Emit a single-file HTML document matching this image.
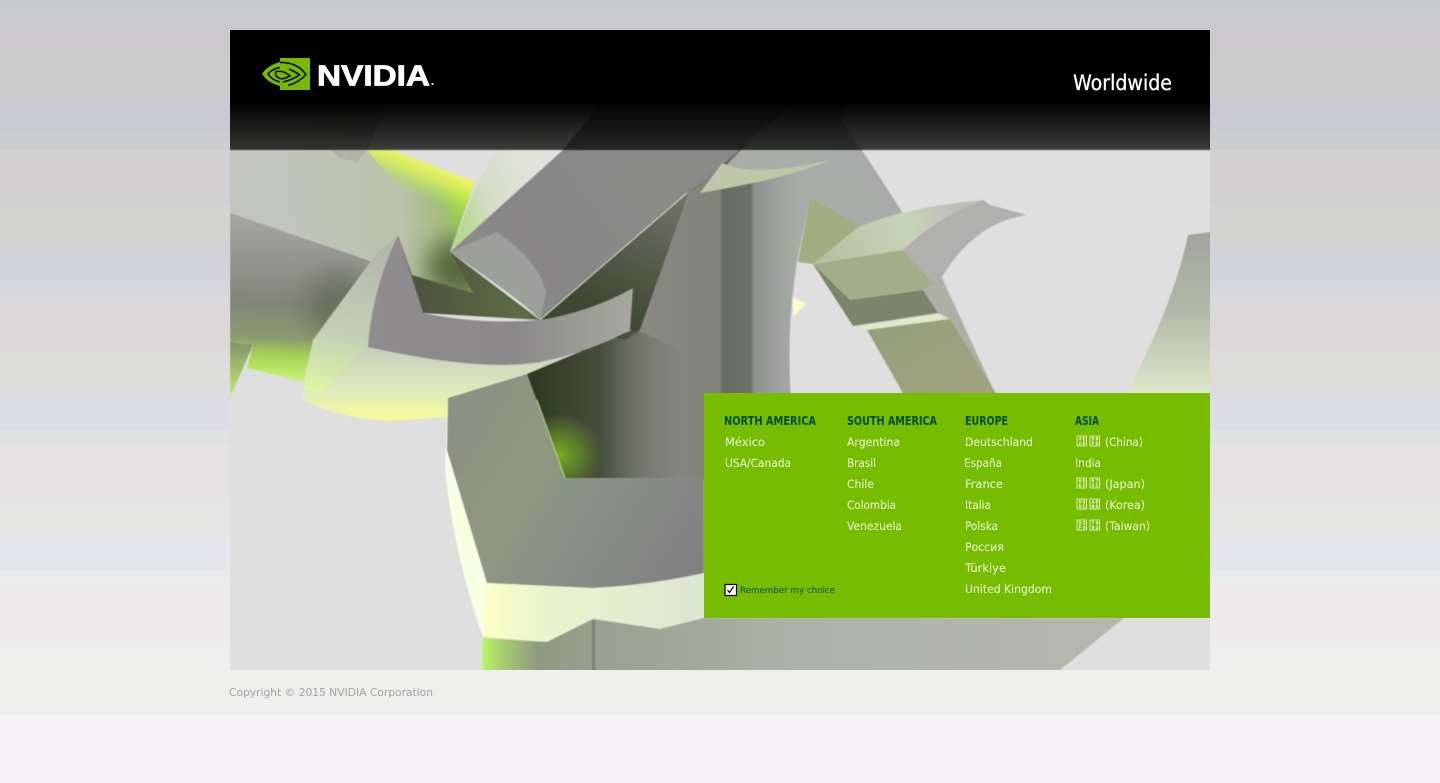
<!DOCTYPE html>
<html lang="en"><head><meta charset="utf-8"><title>NVIDIA Worldwide</title>
<style>
html,body{margin:0;padding:0;width:1440px;height:783px;overflow:hidden;background:#f5f3f7}
svg{display:block;position:absolute;left:0;top:0}
.l{font:11.5px "DejaVu Sans","Liberation Sans",sans-serif;fill:#f2f9e0}
.h{font:bold 12px "DejaVu Sans","Liberation Sans",sans-serif;fill:#00501f}
.t{font:bold 5px "Liberation Mono",monospace;fill:#f2f9e0}
a{text-decoration:none}
</style></head><body>
<svg width="1440" height="783" viewBox="0 0 1440 783" xmlns="http://www.w3.org/2000/svg">
<defs>
<clipPath id="art"><rect x="230" y="30" width="980" height="640"/></clipPath>
<clipPath id="lowc"><path d="M230 213L373 262L313 340L304 382L247 368L253 345L230 342Z"/></clipPath>
<clipPath id="bandc"><path d="M230 90H397L367 150H393L475 182L450 252L473 293L412 275L398 235L373 262L230 213Z"/></clipPath>
<filter id="b6" x="-100%" y="-100%" width="300%" height="300%" color-interpolation-filters="sRGB"><feGaussianBlur stdDeviation="12"/></filter>
<filter id="soft" x="0" y="0" width="100%" height="100%" color-interpolation-filters="sRGB"><feGaussianBlur stdDeviation=".45"/></filter>
<linearGradient id="ring" gradientUnits="userSpaceOnUse" x1="612" y1="0" x2="797" y2="0"><stop offset="0" stop-color="#8b8e85"/><stop offset=".58" stop-color="#81837c"/><stop offset=".6" stop-color="#686b62"/><stop offset=".75" stop-color="#6c7067"/><stop offset=".77" stop-color="#8f9490"/><stop offset="1" stop-color="#a8aca8"/></linearGradient>
<linearGradient id="band" gradientUnits="userSpaceOnUse" x1="280" y1="200" x2="475" y2="190"><stop offset="0" stop-color="#c1c4bc"/><stop offset=".6" stop-color="#bbc2ac"/><stop offset=".85" stop-color="#a3bc80"/><stop offset="1" stop-color="#98d048"/></linearGradient>
<linearGradient id="yel" gradientUnits="userSpaceOnUse" x1="440" y1="165" x2="425" y2="200"><stop offset="0" stop-color="#f6f76c"/><stop offset=".45" stop-color="#d8f258" stop-opacity=".8"/><stop offset="1" stop-color="#a6e545" stop-opacity="0"/></linearGradient>
<linearGradient id="low" gradientUnits="userSpaceOnUse" x1="262" y1="222" x2="256" y2="382"><stop offset="0" stop-color="#a3a3a0"/><stop offset=".5" stop-color="#83867a"/><stop offset=".72" stop-color="#8c9a70"/><stop offset=".83" stop-color="#a4d455"/><stop offset="1" stop-color="#d0f778"/></linearGradient>
<linearGradient id="bl" x1="0" y1="0" x2="0" y2="1"><stop offset="0" stop-color="#83926c"/><stop offset="1" stop-color="#bdf36a"/></linearGradient>
<linearGradient id="bd" gradientUnits="userSpaceOnUse" x1="620" y1="320" x2="690" y2="195"><stop offset="0" stop-color="#3e4832"/><stop offset="1" stop-color="#70756a"/></linearGradient>
<linearGradient id="boxl" gradientUnits="userSpaceOnUse" x1="455" y1="210" x2="530" y2="180"><stop offset="0" stop-color="#b6d98e"/><stop offset=".45" stop-color="#d5ddca"/><stop offset="1" stop-color="#dfe3da"/></linearGradient>
<linearGradient id="boxg" gradientUnits="userSpaceOnUse" x1="470" y1="300" x2="620" y2="190"><stop offset="0" stop-color="#90908e"/><stop offset=".4" stop-color="#888687"/><stop offset="1" stop-color="#8a8a89"/></linearGradient>
<linearGradient id="thl" gradientUnits="userSpaceOnUse" x1="0" y1="240" x2="0" y2="420"><stop offset="0" stop-color="#b5b9b0"/><stop offset=".6" stop-color="#c6cebb"/><stop offset=".83" stop-color="#dfeabf"/><stop offset="1" stop-color="#f6fb96"/></linearGradient>
<linearGradient id="thf" gradientUnits="userSpaceOnUse" x1="340" y1="240" x2="310" y2="390"><stop offset="0" stop-color="#b2b7ad"/><stop offset=".6" stop-color="#c3d0b6"/><stop offset="1" stop-color="#dcf7a4"/></linearGradient>
<linearGradient id="thg" gradientUnits="userSpaceOnUse" x1="370" y1="0" x2="635" y2="0"><stop offset="0" stop-color="#8e8c8d"/><stop offset=".55" stop-color="#8b898a"/><stop offset="1" stop-color="#a6a9a1"/></linearGradient>
<linearGradient id="lr" gradientUnits="userSpaceOnUse" x1="460" y1="420" x2="704" y2="570"><stop offset="0" stop-color="#8c9184"/><stop offset=".3" stop-color="#8f9980"/><stop offset=".6" stop-color="#878e88"/><stop offset="1" stop-color="#828081"/></linearGradient>
<linearGradient id="pale" gradientUnits="userSpaceOnUse" x1="487" y1="0" x2="704" y2="0"><stop offset="0" stop-color="#fbffc8"/><stop offset=".25" stop-color="#e9f5cd"/><stop offset="1" stop-color="#dde6d2"/></linearGradient>
<linearGradient id="bot" gradientUnits="userSpaceOnUse" x1="483" y1="0" x2="1100" y2="0"><stop offset="0" stop-color="#b8f565"/><stop offset=".04" stop-color="#a3c572"/><stop offset=".09" stop-color="#8e9a81"/><stop offset=".2" stop-color="#9aa192"/><stop offset=".5" stop-color="#adb1a7"/><stop offset="1" stop-color="#b6b8af"/></linearGradient>
<linearGradient id="holeg" gradientUnits="userSpaceOnUse" x1="535" y1="0" x2="680" y2="0"><stop offset="0" stop-color="#2f3a24"/><stop offset=".45" stop-color="#3f4735" stop-opacity=".92"/><stop offset=".75" stop-color="#5d6052" stop-opacity=".45"/><stop offset="1" stop-color="#5d6052" stop-opacity="0"/></linearGradient>
<radialGradient id="gl" gradientUnits="userSpaceOnUse" cx="560" cy="455" r="42"><stop offset="0" stop-color="#7fbb20" stop-opacity=".9"/><stop offset=".5" stop-color="#6f9c28" stop-opacity=".6"/><stop offset="1" stop-color="#6f9c28" stop-opacity="0"/></radialGradient>
<linearGradient id="far" x1="0" y1="0" x2="0" y2="1"><stop offset="0" stop-color="#9fa49b"/><stop offset=".5" stop-color="#b3baa9"/><stop offset="1" stop-color="#e0edcc"/></linearGradient>
<linearGradient id="sh" gradientUnits="userSpaceOnUse" x1="0" y1="30" x2="0" y2="150"><stop offset="0" stop-color="#000"/><stop offset=".583" stop-color="#000"/><stop offset="1" stop-color="#000" stop-opacity=".73"/></linearGradient>
<linearGradient id="pg" x1="0" y1="0" x2="1" y2="1"><stop offset="0" stop-color="#93a07a"/><stop offset="1" stop-color="#a3a380"/></linearGradient>
<linearGradient id="tp" gradientUnits="userSpaceOnUse" x1="830" y1="260" x2="960" y2="205"><stop offset="0" stop-color="#b4c2a2"/><stop offset=".6" stop-color="#c8d4ba"/><stop offset="1" stop-color="#bcbcb6"/></linearGradient>
<linearGradient id="beh" gradientUnits="userSpaceOnUse" x1="420" y1="300" x2="520" y2="310"><stop offset="0" stop-color="#4e553f"/><stop offset="1" stop-color="#5d6b45"/></linearGradient>
</defs>

<!-- page stripes -->
<g shape-rendering="crispEdges">
<rect y="0" width="1440" height="5" fill="#c5c8cc"/><rect y="5" width="1440" height="15" fill="#cacbce"/><rect y="20" width="1440" height="40" fill="#cbc9cb"/><rect y="60" width="1440" height="40" fill="#cbcbcc"/><rect y="100" width="1440" height="30" fill="#c9cad2"/><rect y="130" width="1440" height="20" fill="#cacece"/><rect y="150" width="1440" height="55" fill="#d2d0d1"/><rect y="205" width="1440" height="40" fill="#d3d3d2"/><rect y="245" width="1440" height="35" fill="#d2d3da"/><rect y="280" width="1440" height="15" fill="#d3d8da"/><rect y="295" width="1440" height="55" fill="#dbd8da"/><rect y="350" width="1440" height="40" fill="#dcdcda"/><rect y="390" width="1440" height="40" fill="#dcdce3"/><rect y="430" width="1440" height="15" fill="#dde2e3"/><rect y="445" width="1440" height="55" fill="#e6e2e4"/><rect y="500" width="1440" height="35" fill="#e4e4e3"/><rect y="535" width="1440" height="35" fill="#e5e5ec"/><rect y="570" width="1440" height="12" fill="#e6ebec"/><rect y="582" width="1440" height="63" fill="#efebed"/><rect y="645" width="1440" height="70" fill="#eeeeed"/><rect y="715" width="1440" height="68" fill="#f5f3f7"/>
</g>

<g clip-path="url(#art)">
<g filter="url(#soft)">
<rect x="200" y="0" width="1040" height="700" fill="#dfdfdf"/>

<!-- big ring and column -->
<path d="M640 330L690 190L700 150L780 90H820Q870 160 905 217L860 228L810 197L797 262Q786 330 791 400V480H530V370L625 335Z" fill="url(#ring)"/>
<path d="M793 297L806 304L793 317Z" fill="#fdfdd0"/>

<!-- fill behind thorn tip and box -->
<path d="M398 235L450 252L540 320L423 313Z" fill="url(#beh)"/>

<!-- upper band -->
<path d="M230 90H397L367 150H393L475 182L450 252L473 293L412 275L398 235L373 262L230 213Z" fill="url(#band)"/>
<g clip-path="url(#bandc)">
<ellipse cx="460" cy="268" rx="34" ry="30" fill="#4c5a34" opacity=".85" filter="url(#b6)"/>
<ellipse cx="470" cy="205" rx="20" ry="22" fill="#9be030" opacity=".7" filter="url(#b6)"/>
</g>
<path d="M367 150H393L475 182L462 218L400 190Z" fill="url(#yel)"/>
<path d="M330 150H367L357 162L340 158Z" fill="#b0b4a8"/>

<!-- lower face -->
<path d="M230 213L373 262L313 340L304 382L247 368L253 345L230 342Z" fill="url(#low)"/>
<g clip-path="url(#lowc)"><ellipse cx="338" cy="305" rx="32" ry="34" fill="#555c48" opacity=".5" filter="url(#b6)"/></g>
<path d="M230 342L253 345L230 398Z" fill="url(#bl)"/>

<!-- dark area right of box -->
<path d="M540 320L687 193L710 180L690 190L640 330L625 340Z" fill="url(#bd)"/>

<!-- top box -->
<path d="M450 252L477 183L497 150L530 90H612L563 150Z" fill="url(#boxl)"/>
<path d="M450 252L563 150L612 90H810L710 175L687 193L540 320Q530 306 450 252Z" fill="url(#boxg)"/>
<path d="M450 252L497 232Q540 262 546 293L540 320Q530 306 450 252Z" fill="#9d9f9a"/>
<path d="M540 320L687 193" stroke="#dbe3cc" stroke-width="1" fill="none"/>

<!-- piece over ring -->
<path d="M700 193L760 130L815 90H850L833 150Q810 168 780 175Z" fill="#a9ada9"/>
<path d="M700 193L722 163Q755 178 830 160Q790 178 700 193Z" fill="#bcc8a8"/>

<!-- central dark hole -->
<path d="M527 374L630 330L642 332L680 350V478H565Z" fill="url(#holeg)"/>
<path d="M527 374L630 330L642 332L680 350V478H565Z" fill="url(#gl)"/>

<!-- thorn -->
<path d="M398 235L377 253L313 340L304 390L303 400Q340 418 390 421L447 417L527 374L632 330L368 347Z" fill="url(#thl)"/>
<path d="M398 235L377 253L313 340L304 390L322 392L368 347Q375 280 398 235Z" fill="url(#thf)"/>
<path d="M398 235Q372 290 368 347Q480 372 540 362Q590 352 630 330L633 288Q590 312 540 320Q480 325 423 313Z" fill="url(#thg)"/>

<!-- lower ring -->
<path d="M448 398L527 374L565 478H704V573Q650 585 593 588L487 583Q455 500 447 450Z" fill="url(#lr)"/>
<path d="M537 400L565 478" stroke="#b8dc80" stroke-width="1" fill="none"/>
<path d="M448 398L447 450L487 583L483 637Q455 560 445 470Z" fill="#f8ffe2"/>
<path d="M487 583L483 637L547 642L593 619L660 629L704 618V573Q650 585 593 588Z" fill="url(#pale)"/>
<path d="M483 638L547 642L593 619L660 629L704 618H1124L1060 670V700H482Z" fill="url(#bot)"/>
<rect x="592" y="620" width="3" height="60" fill="#7c8078"/>

<!-- right piece -->
<path d="M810 197L860 227L813 264L798 262Z" fill="#9fad80"/>
<path d="M813 264L857 228Q900 208 983 200Q940 215 903 250Z" fill="url(#tp)"/>
<path d="M983 200L990 205L1027 215Q975 222 942 277L937 287L903 250Q940 215 983 200Z" fill="#b0b0ae"/>
<path d="M813 264L903 250L937 287L922 290L850 300Z" fill="#a2ae8a"/>
<path d="M813 264L853 326L938 313L923 290L850 300Z" fill="#7a856b"/>
<path d="M923 290L942 278L995 393H975L950 319L938 313Z" fill="#aeb0a8"/>
<path d="M857 326L938 315L950 319L867 330Z" fill="#dfe8c8"/>
<path d="M867 330L907 400H1000L950 319Z" fill="url(#pg)"/>

<!-- far right piece -->
<path d="M1188 235L1240 228V400H1123Q1173 307 1188 235Z" fill="url(#far)"/>

<!-- header shade -->
<rect x="200" y="0" width="1040" height="150" fill="url(#sh)"/>
</g>

<!-- region panel -->
<rect x="704" y="393" width="506" height="225" fill="#76bc00"/>
</g>

<!-- logo -->
<g>
<path d="M280 58H310V90H280V86Q268 83 262 74Q268 65 280 62Z" fill="#76b900"/>
<path d="M280 62.500Q297 62 306 74.500Q298 83 288 85.500" fill="none" stroke="#000" stroke-width="1.500"/>
<path d="M280 67.500Q272 69 268 74Q272 80 280 82" fill="none" stroke="#000" stroke-width="1.500"/>
<path d="M289 69Q296 72 299.500 75Q292 80 283 82" fill="none" stroke="#000" stroke-width="1.500"/>
<path d="M290 76Q284 70 276 71.500Q274 76 280 78.500Q285 79.500 289 76Z" fill="none" stroke="#000" stroke-width="1.500"/>
<text x="317" y="85.500" font-family="Liberation Sans,sans-serif" font-weight="bold" font-size="28.500" fill="#fff" stroke="#fff" stroke-width=".8" textLength="113" lengthAdjust="spacingAndGlyphs">NVIDIA</text>
<circle cx="432.500" cy="84" r="1.100" fill="#ddd"/>
</g>
<text x="1073" y="90" font-family="DejaVu Sans,sans-serif" font-size="21" fill="#fff" stroke="#fff" stroke-width=".3" textLength="99" lengthAdjust="spacingAndGlyphs">Worldwide</text>

<!-- region lists -->
<g>
<text class="h" x="724" y="425" textLength="92" lengthAdjust="spacingAndGlyphs">NORTH AMERICA</text>
<a href="#"><text class="l" x="725" y="446" textLength="40" lengthAdjust="spacingAndGlyphs">México</text></a>
<a href="#"><text class="l" x="725" y="467" textLength="66" lengthAdjust="spacingAndGlyphs">USA/Canada</text></a>

<text class="h" x="847" y="425" textLength="90" lengthAdjust="spacingAndGlyphs">SOUTH AMERICA</text>
<a href="#"><text class="l" x="847" y="446" textLength="53" lengthAdjust="spacingAndGlyphs">Argentina</text></a>
<a href="#"><text class="l" x="847" y="467" textLength="29" lengthAdjust="spacingAndGlyphs">Brasil</text></a>
<a href="#"><text class="l" x="847" y="488" textLength="27" lengthAdjust="spacingAndGlyphs">Chile</text></a>
<a href="#"><text class="l" x="847" y="509" textLength="49" lengthAdjust="spacingAndGlyphs">Colombia</text></a>
<a href="#"><text class="l" x="847" y="530" textLength="55" lengthAdjust="spacingAndGlyphs">Venezuela</text></a>

<text class="h" x="965" y="425" textLength="43" lengthAdjust="spacingAndGlyphs">EUROPE</text>
<a href="#"><text class="l" x="965" y="446" textLength="68" lengthAdjust="spacingAndGlyphs">Deutschland</text></a>
<a href="#"><text class="l" x="964" y="467" textLength="38" lengthAdjust="spacingAndGlyphs">España</text></a>
<a href="#"><text class="l" x="965" y="488" textLength="38" lengthAdjust="spacingAndGlyphs">France</text></a>
<a href="#"><text class="l" x="965" y="509" textLength="26" lengthAdjust="spacingAndGlyphs">Italia</text></a>
<a href="#"><text class="l" x="965" y="530" textLength="33" lengthAdjust="spacingAndGlyphs">Polska</text></a>
<a href="#"><text class="l" x="965" y="551" textLength="39" lengthAdjust="spacingAndGlyphs">Россия</text></a>
<a href="#"><text class="l" x="965" y="572" textLength="41" lengthAdjust="spacingAndGlyphs">Türkiye</text></a>
<a href="#"><text class="l" x="965" y="593" textLength="87" lengthAdjust="spacingAndGlyphs">United Kingdom</text></a>

<text class="h" x="1075" y="425" textLength="24" lengthAdjust="spacingAndGlyphs">ASIA</text>
<a href="#"><text class="l" x="1105" y="446" textLength="38" lengthAdjust="spacingAndGlyphs">(China)</text></a>
<a href="#"><text class="l" x="1075" y="467" textLength="26" lengthAdjust="spacingAndGlyphs">India</text></a>
<a href="#"><text class="l" x="1105" y="488" textLength="40" lengthAdjust="spacingAndGlyphs">(Japan)</text></a>
<a href="#"><text class="l" x="1105" y="509" textLength="40" lengthAdjust="spacingAndGlyphs">(Korea)</text></a>
<a href="#"><text class="l" x="1105" y="530" textLength="45" lengthAdjust="spacingAndGlyphs">(Taiwan)</text></a>

<!-- missing-glyph boxes, as shown in the reference -->
<g fill="none" stroke="#f2f9e0" stroke-width=".8">
<rect x="1077" y="436" width="9.500" height="10"/><rect x="1090" y="436" width="9.500" height="10"/>
<rect x="1077" y="478" width="9.500" height="10"/><rect x="1090" y="478" width="9.500" height="10"/>
<rect x="1077" y="499" width="9.500" height="10"/><rect x="1090" y="499" width="9.500" height="10"/>
<rect x="1077" y="520" width="9.500" height="10"/><rect x="1090" y="520" width="9.500" height="10"/>
</g>
<text class="t" x="1078.500" y="440.500" textLength="7">4E</text><text class="t" x="1078.500" y="445" textLength="7">2D</text>
<text class="t" x="1091.500" y="440.500" textLength="7">56</text><text class="t" x="1091.500" y="445" textLength="7">FD</text>
<text class="t" x="1078.500" y="482.500" textLength="7">65</text><text class="t" x="1078.500" y="487" textLength="7">E5</text>
<text class="t" x="1091.500" y="482.500" textLength="7">67</text><text class="t" x="1091.500" y="487" textLength="7">2C</text>
<text class="t" x="1078.500" y="503.500" textLength="7">D5</text><text class="t" x="1078.500" y="508" textLength="7">5C</text>
<text class="t" x="1091.500" y="503.500" textLength="7">AD</text><text class="t" x="1091.500" y="508" textLength="7">6D</text>
<text class="t" x="1078.500" y="524.500" textLength="7">53</text><text class="t" x="1078.500" y="529" textLength="7">F0</text>
<text class="t" x="1091.500" y="524.500" textLength="7">70</text><text class="t" x="1091.500" y="529" textLength="7">63</text>

<!-- remember -->
<rect x="725" y="584.500" width="11.500" height="11" fill="#fff" stroke="#000" stroke-width="1.200"/>
<path d="M727.500 590L729.500 592.500L733.500 586.500" fill="none" stroke="#000" stroke-width="1.200"/>
<text x="740" y="593" font-family="DejaVu Sans,sans-serif" font-size="9" fill="#00501f" textLength="95" lengthAdjust="spacingAndGlyphs">Remember my choice</text>
</g>

<text x="229" y="696" font-family="DejaVu Sans,sans-serif" font-size="11" fill="#a3a3a3" textLength="204" lengthAdjust="spacingAndGlyphs">Copyright © 2015 NVIDIA Corporation</text>
</svg>
</body></html>
